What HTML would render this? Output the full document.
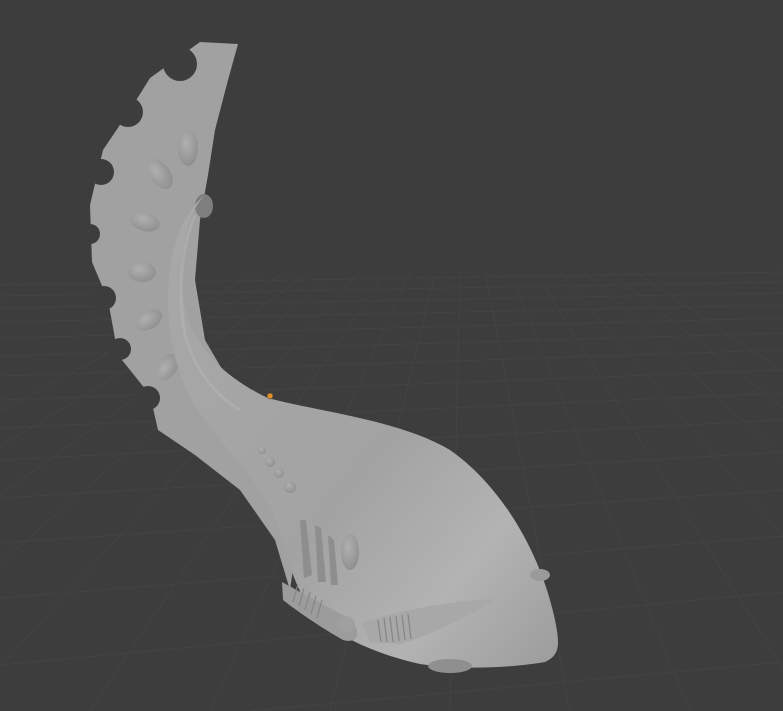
<!DOCTYPE html>
<html><head><style>html,body{margin:0;padding:0;background:#3d3d3d;overflow:hidden}svg{display:block}</style></head>
<body>
<svg width="783" height="711" viewBox="0 0 783 711" xmlns="http://www.w3.org/2000/svg">
<defs>
<linearGradient id="body" x1="0" y1="0" x2="1" y2="1">
<stop offset="0" stop-color="#a8a8a8"/><stop offset="0.55" stop-color="#a3a3a3"/><stop offset="0.78" stop-color="#b3b3b3"/><stop offset="1" stop-color="#9c9c9c"/></linearGradient>
<radialGradient id="egg" cx="0.4" cy="0.35" r="0.7"><stop offset="0" stop-color="#b0b0b0"/><stop offset="1" stop-color="#8e8e8e"/></radialGradient>
</defs>
<rect width="783" height="711" fill="#3d3d3d"/>
<g stroke="#434343" stroke-width="1" fill="none">
<path d="M0 285 L783 272"/><path d="M0 296 L783 282"/><path d="M0 308 L783 293"/><path d="M0 322 L783 305"/><path d="M0 338 L783 318"/><path d="M0 356 L783 333"/><path d="M0 376 L783 350"/><path d="M0 400 L783 370"/><path d="M0 428 L783 393"/><path d="M0 460 L783 420"/><path d="M0 498 L783 452"/><path d="M0 543 L783 490"/><path d="M0 598 L783 536"/><path d="M0 665 L783 592"/><path d="M250 711 L783 662"/>
<path d="M-300 711 L310 272"/><path d="M-170 711 L335 272"/><path d="M-40 711 L360 272"/><path d="M90 711 L385 272"/><path d="M210 711 L410 272"/><path d="M330 711 L435 272"/><path d="M450 711 L460 272"/><path d="M570 711 L485 272"/><path d="M690 711 L510 272"/><path d="M810 711 L535 272"/><path d="M930 711 L560 272"/><path d="M1050 711 L585 272"/><path d="M1170 711 L610 272"/><path d="M1290 711 L635 272"/><path d="M-430 711 L285 272"/><path d="M-560 711 L260 272"/>
</g>
<path d="M200 42 L238 44 L228 80 L215 130 L208 175 L200 220 L195 280 L205 340 L240 400 L280 440 L300 520 L290 590 L275 540 L240 490 L195 455 L158 430 L150 395 L118 355 L108 300 L92 262 L90 205 L103 150 L130 110 L150 78 Z" fill="#a1a1a1"/>
<g fill="#3d3d3d">
<circle cx="180" cy="64" r="17"/><circle cx="128" cy="112" r="15"/><circle cx="101" cy="172" r="13"/><circle cx="90" cy="234" r="10"/><circle cx="104" cy="298" r="12"/><circle cx="120" cy="349" r="11"/><circle cx="148" cy="398" r="12"/>
</g>
<g fill="url(#egg)">
<ellipse cx="188" cy="148" rx="10" ry="18"/><ellipse cx="160" cy="174" rx="10" ry="17" transform="rotate(-35 160 174)"/><ellipse cx="145" cy="222" rx="15" ry="9" transform="rotate(15 145 222)"/><ellipse cx="142" cy="272" rx="14" ry="10"/><ellipse cx="149" cy="320" rx="14" ry="9" transform="rotate(-30 149 320)"/><ellipse cx="168" cy="367" rx="15" ry="9" transform="rotate(-55 168 367)"/>
</g>
<ellipse cx="204" cy="206" rx="9" ry="12" fill="#7e7e7e"/>
<path d="M205 195 C185 215 178 260 183 300 C190 345 225 378 268 398 C320 412 400 420 450 450 C500 485 540 550 555 620 C560 645 560 655 545 662 C510 668 460 670 420 664 C380 655 345 640 320 620 C300 600 290 570 285 545 C270 490 230 455 205 420 C178 385 168 340 168 300 C168 255 180 215 205 195 Z" fill="url(#body)"/>
<path d="M195 215 C180 250 178 300 185 335 C195 370 215 395 240 410" stroke="#b5b5b5" stroke-width="3" fill="none" opacity="0.5"/>
<g fill="#8e8e8e"><path d="M300 520 L306 520 L312 575 L304 578 Z"/><path d="M315 525 L321 528 L326 582 L318 582 Z"/><path d="M328 535 L334 540 L338 585 L331 585 Z"/></g>
<ellipse cx="350" cy="552" rx="9" ry="18" fill="url(#egg)"/>
<g fill="url(#egg)"><circle cx="262" cy="450" r="4"/><circle cx="270" cy="462" r="5"/><circle cx="279" cy="473" r="5"/><circle cx="290" cy="487" r="6"/></g>
<path d="M282 582 C300 592 330 608 348 618 C362 628 360 645 343 640 C322 628 298 612 283 600 Z" fill="#9c9c9c"/>
<path d="M362 622 L400 612 C440 603 480 599 498 599 C470 615 430 636 400 644 L370 642 Z" fill="#a8a8a8"/>
<ellipse cx="346" cy="624" rx="9" ry="8" fill="#a0a0a0"/>
<g stroke="#858585" stroke-width="1.2"><path d="M378 620 L381 642"/><path d="M384 618 L387 642"/><path d="M390 617 L393 642"/><path d="M396 616 L399 641"/><path d="M402 615 L405 640"/><path d="M408 614 L411 639"/><path d="M298 584 L293 602"/><path d="M304 588 L299 606"/><path d="M310 592 L305 610"/><path d="M316 596 L311 614"/><path d="M322 600 L317 618"/></g>
<ellipse cx="540" cy="575" rx="10" ry="6" fill="#9a9a9a"/>
<ellipse cx="450" cy="666" rx="22" ry="7" fill="#8f8f8f"/>
<circle cx="270" cy="396" r="3" fill="#e0902a" stroke="#333" stroke-width="0.5"/>
</svg>
</body></html>
